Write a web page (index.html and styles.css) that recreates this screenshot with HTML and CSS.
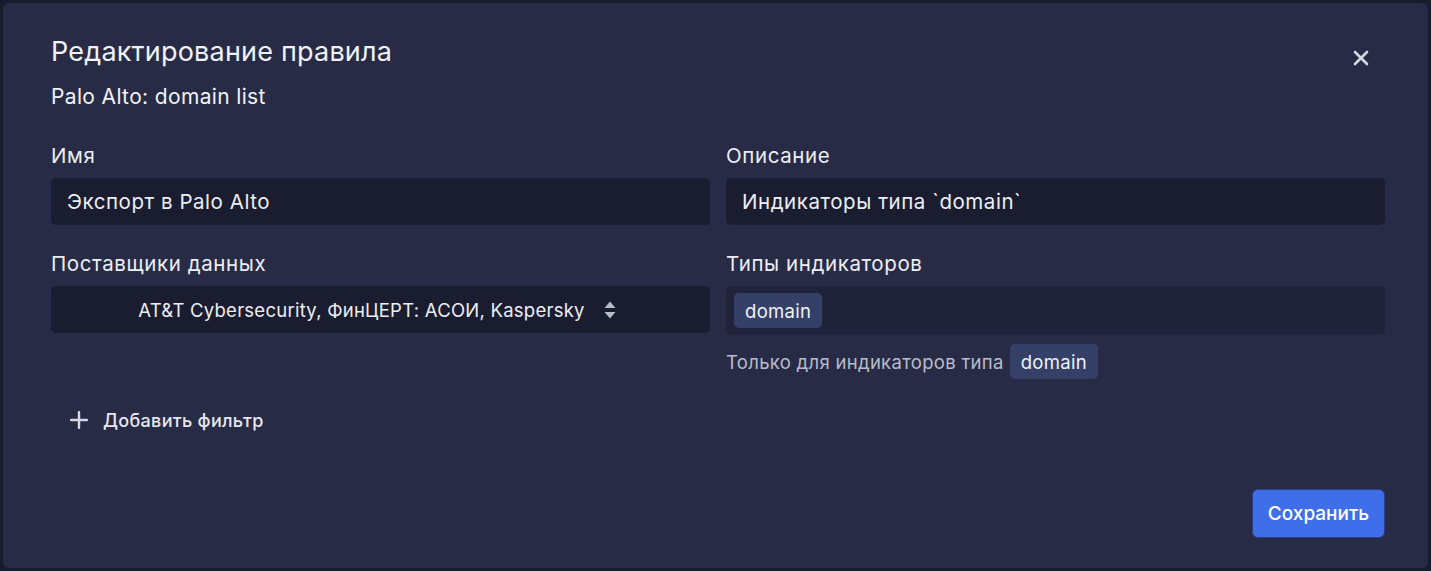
FILE: index.html
```html
<!DOCTYPE html>
<html lang="ru">
<head>
<meta charset="utf-8">
<title>Редактирование правила</title>
<link rel="stylesheet" href="styles.css">
</head>
<body>
<div class="modal">
  <div class="header">
    <div class="heading">
      <h1 class="title">Редактирование правила</h1>
      <div class="subtitle">Palo Alto: domain list</div>
    </div>
    <button class="close" aria-label="Закрыть">
      <svg width="16" height="16" viewBox="0 0 16 16"><path d="M2 2L14 14M14 2L2 14" stroke="#d6d8e0" stroke-width="2.6" stroke-linecap="round"/></svg>
    </button>
  </div>

  <div class="grid">
    <div class="field">
      <label class="label">Имя</label>
      <div class="input">Экспорт в Palo Alto</div>
    </div>
    <div class="field">
      <label class="label">Описание</label>
      <div class="input">Индикаторы типа `domain`</div>
    </div>
    <div class="field">
      <label class="label">Поставщики данных</label>
      <div class="input select">
        <span>AT&amp;T Cybersecurity, ФинЦЕРТ: АСОИ, Kaspersky</span>
        <svg class="updown" width="14" height="20" viewBox="0 0 14 20"><path d="M7 1.5L12.5 8H1.5Z" fill="#b7bac8"/><path d="M7 18.5L12.5 12H1.5Z" fill="#b7bac8"/></svg>
      </div>
    </div>
    <div class="field">
      <label class="label">Типы индикаторов</label>
      <div class="tags"><span class="chip">domain</span></div>
      <div class="help">Только для индикаторов типа <span class="chip">domain</span></div>
    </div>
  </div>

  <button class="add">
    <svg width="18" height="18" viewBox="0 0 18 18"><path d="M9 1V17M1 9H17" stroke="#d6d8e0" stroke-width="2.4" stroke-linecap="round"/></svg>
    <span>Добавить фильтр</span>
  </button>

  <div class="footer">
    <button class="save">Сохранить</button>
  </div>
</div>
</body>
</html>
```

FILE: styles.css
```css
* { box-sizing: border-box; }
html, body { margin: 0; padding: 0; }
body {
  background: #191c2c;
  font-family: Inter, "Noto Sans", "Liberation Sans", sans-serif;
  color: #eceef4;
  width: 1431px;
  height: 571px;
  overflow: hidden;
  padding: 3px;
}
.modal {
  background: #282b46;
  border-radius: 6px;
  height: 565px;
  padding: 33px 43px 0 48px;
  display: flex;
  flex-direction: column;
}
.header {
  display: flex;
  justify-content: space-between;
  align-items: flex-start;
}
.title {
  margin: 0;
  font-size: 27px;
  line-height: 32px;
  font-weight: 400;
  color: #f1f2f6;
  letter-spacing: 0.2px;
}
.subtitle {
  margin-top: 16px;
  font-size: 21px;
  line-height: 26px;
  color: #f1f2f6;
  letter-spacing: 0.35px;
}
.close {
  background: none;
  border: 0;
  padding: 0;
  margin: 14px 16px 0 0;
  width: 16px;
  height: 16px;
  display: flex;
}
.grid {
  margin-top: 34px;
  display: grid;
  grid-template-columns: 659px 659px;
  column-gap: 16px;
  row-gap: 27px;
  align-items: start;
}
.field { display: flex; flex-direction: column; }
.label {
  font-size: 20.5px;
  line-height: 24px;
  margin-bottom: 10px;
  color: #eceef4;
  letter-spacing: 0.6px;
}
.input {
  height: 47px;
  background: #1a1d2f;
  border-radius: 5px;
  padding: 0 16px;
  display: flex;
  align-items: center;
  font-size: 20.5px;
  color: #eceef4;
  letter-spacing: 0.55px;
}
.select {
  justify-content: center;
  gap: 18px;
  padding-right: 22px;
  font-size: 18.5px;
  letter-spacing: 0.25px;
}
.updown { flex: none; }
.tags {
  height: 49px;
  background: #20243a;
  border-radius: 5px;
  padding: 7px 8px;
  display: flex;
  align-items: center;
}
.chip {
  display: inline-flex;
  align-items: center;
  height: 35px;
  padding: 0 11px;
  background: #344068;
  border-radius: 5px;
  font-size: 18.5px;
  color: #f1f2f6;
  letter-spacing: 0.3px;
}
.help {
  margin-top: 9px;
  display: flex;
  align-items: center;
  gap: 6px;
  font-size: 18.5px;
  color: #b9bccb;
  letter-spacing: 0.3px;
}
.add {
  margin-top: 29px;
  align-self: flex-start;
  background: none;
  border: 0;
  padding: 0 0 0 19px;
  display: flex;
  align-items: center;
  gap: 15px;
  height: 24px;
  font-family: inherit;
  font-size: 18px;
  font-weight: 500;
  color: #e6e8ee;
  letter-spacing: 0.3px;
}
.footer {
  margin-top: 57px;
  display: flex;
  justify-content: flex-end;
}
.save {
  width: 133px;
  height: 49px;
  background: #3f6fe8;
  border: 1px solid #2a3f8a;
  border-radius: 6px;
  font-family: inherit;
  font-size: 19px;
  font-weight: 500;
  color: #ffffff;
}
```
